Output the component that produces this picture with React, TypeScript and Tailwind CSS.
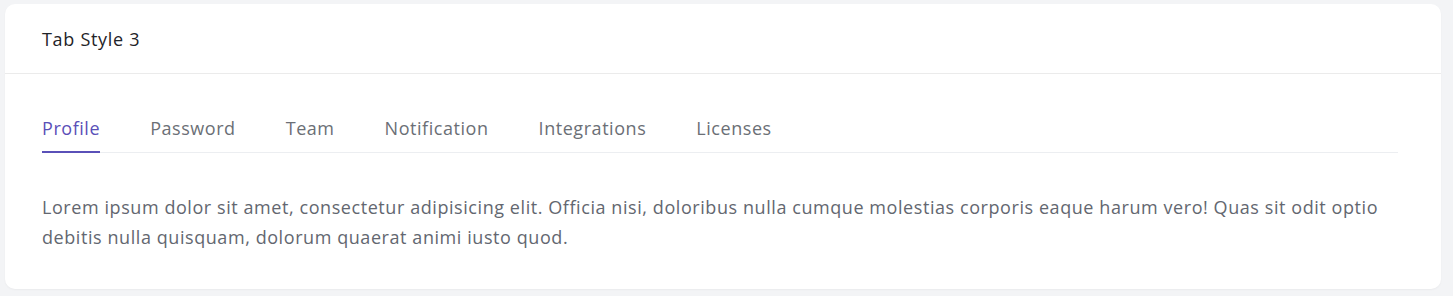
import { useState } from "react";

const tabs = ["Profile", "Password", "Team", "Notification", "Integrations", "Licenses"];

const App = () => {
  const [active, setActive] = useState("Profile");

  return (
    <div className="min-h-[296px] bg-[#f3f4f6] pt-[4px] pl-[5px] pr-[12px] font-['Open_Sans',sans-serif]">
      <div className="bg-white rounded-[10px] shadow-[0_1px_2px_rgba(0,0,0,0.04)] h-[285px]">
        {/* header */}
        <div className="h-[70px] border-b border-[#ebebeb] flex items-center px-[37px]">
          <h2 className="text-[18px] tracking-[0.7px] text-[#1f2328] pt-[2px]">Tab Style 3</h2>
        </div>

        <div className="pl-[37px] pr-[43px] pt-[41px]">
          <div className="flex gap-[50px] border-b border-[#eceef1]">
            {tabs.map((t) => (
              <button
                key={t}
                onClick={() => setActive(t)}
                className={
                  t === active
                    ? "text-[18px] tracking-[0.55px] text-[#5a50b8] pb-[10px] border-b-2 border-[#5a50b8] -mb-px leading-[26px]"
                    : "text-[18px] tracking-[0.55px] text-[#6b6f76] pb-[10px] border-b-2 border-transparent -mb-px leading-[26px]"
                }
              >
                {t}
              </button>
            ))}
          </div>

          <p className="mt-[39px] text-[18px] tracking-[0.57px] leading-[30px] text-[#636770]">
            Lorem ipsum dolor sit amet, consectetur adipisicing elit. Officia nisi, doloribus nulla cumque molestias
            corporis eaque harum vero! Quas sit odit optio debitis nulla quisquam, dolorum quaerat animi iusto quod.
          </p>
        </div>
      </div>
    </div>
  );
};

export default App;
